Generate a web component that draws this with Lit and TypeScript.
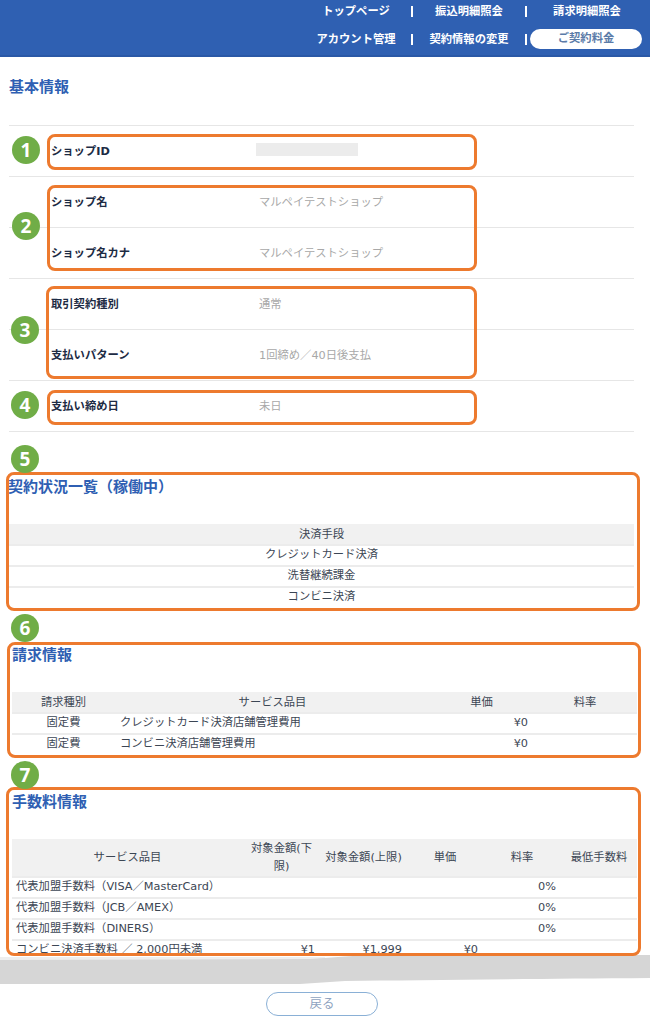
import { LitElement, html, css, svg } from "lit";
import { customElement } from "lit/decorators.js";

const marks = [
  { n: 1, x: 26, y: 150 },
  { n: 2, x: 26, y: 226 },
  { n: 3, x: 25, y: 330 },
  { n: 4, x: 25, y: 405 },
  { n: 5, x: 25, y: 459 },
  { n: 6, x: 25, y: 628 },
  { n: 7, x: 25, y: 775 },
];
const boxes = [
  { x: 47, y: 134, w: 430, h: 36 },
  { x: 47, y: 185, w: 430, h: 86 },
  { x: 46, y: 286, w: 431, h: 93 },
  { x: 47, y: 390, w: 430, h: 35 },
  { x: 6, y: 472, w: 634, h: 139 },
  { x: 7, y: 642, w: 634, h: 116 },
  { x: 6, y: 787, w: 635, h: 169 },
];
const info = [
  ["ショップID", ""],
  ["ショップ名", "マルペイテストショップ"],
  ["ショップ名カナ", "マルペイテストショップ"],
  ["取引契約種別", "通常"],
  ["支払いパターン", "1回締め／40日後支払"],
  ["支払い締め日", "未日"],
];

@customElement("app-root")
export class AppRoot extends LitElement {
  static styles = css`
    :host {
      display: block;
      position: relative;
      width: 650px;
      height: 1024px;
      overflow: hidden;
      background: #fff;
      font-family: "DejaVu Sans", "Noto Sans CJK JP", sans-serif;
      font-size: 11.3px;
      color: #3c4654;
    }
    header {
      height: 55px;
      background: #2f60b2;
      border-bottom: 2px solid #2a58a6;
      display: grid;
      grid-template-rows: 22px 22px;
      row-gap: 6px;
      justify-content: end;
    }
    .nav {
      display: grid;
      grid-template-columns: 112px 114px 120px;
      align-items: center;
      color: #fff;
      font-weight: 700;
      padding-right: 3px;
    }
    .nav span {
      text-align: center;
      border-right: 2px solid #fff;
      line-height: 11px;
    }
    .nav span:last-child {
      border-right: 0;
    }
    .nav .pill {
      background: #fff;
      color: #5b7ba8;
      border-radius: 11px;
      line-height: 20px;
      height: 20px;
      margin-left: 3px;
      width: 112px;
    }
    h2 {
      margin: 0;
      font-size: 15px;
      line-height: 20px;
      font-weight: 700;
      color: #2f5fb3;
    }
    .basic {
      padding: 20px 16px 0 9px;
    }
    .rows {
      margin-top: 28px;
      border-top: 1px solid #e6e6e6;
    }
    .row {
      box-sizing: border-box;
      height: 51px;
      border-bottom: 1px solid #e6e6e6;
      display: grid;
      grid-template-columns: 208px 1fr;
      padding-left: 42px;
      padding-bottom: 3px;
      align-items: center;
    }
    .row b {
      color: #1d2b44;
    }
    .row i {
      font-style: normal;
      color: #a8a8a8;
    }
    .mask {
      display: block;
      width: 102px;
      height: 13px;
      background: #ececec;
      margin-left: -3px;
    }
    .s5 {
      padding: 45px 16px 0 8px;
    }
    .s6 {
      padding: 38px 13px 0 12px;
    }
    .s7 {
      padding: 38px 13px 0 12px;
      height: 164px;
      overflow: hidden;
    }
    table {
      width: 100%;
      border-collapse: collapse;
      table-layout: fixed;
      margin-top: 27px;
    }
    .s5 table {
      width: calc(100% - 1px);
      margin-left: 1px;
    }
    th {
      background: #f1f1f1;
      font-weight: 400;
      height: 19px;
      padding: 1px 0 0;
      text-align: center;
      line-height: 18px;
    }
    td {
      height: 16px;
      padding: 1px 5px 2px;
      border-top: 2px solid #ececec;
      line-height: 16px;
      white-space: nowrap;
    }
    .c {
      text-align: center;
    }
    .r {
      text-align: right;
    }
    .s7 td:first-child {
      padding-left: 4px;
    }
    .s7 th {
      height: 37px;
      padding: 0 5px;
    }
    .band {
      display: block;
      width: 650px;
      height: 36px;
      margin-top: -1px;
    }
    .foot {
      display: flex;
      justify-content: center;
      margin-top: 1px;
    }
    .back {
      width: 110px;
      height: 22px;
      line-height: 22px;
      border: 1px solid #8ab0d6;
      border-radius: 12px;
      text-align: center;
      color: #8fa3c0;
      font-size: 12.5px;
      margin-right: 6px;
    }
    .box {
      position: absolute;
      box-sizing: border-box;
      border: 3px solid #ed7a2e;
      border-radius: 8px;
    }
    .mark {
      position: absolute;
      width: 28px;
      height: 28px;
      margin: -14px 0 0 -14px;
      border-radius: 50%;
      background: #70ad47;
      color: #fff;
      font-family: "Open Sans", sans-serif;
      font-weight: 700;
      font-size: 19px;
      line-height: 28px;
      text-align: center;
    }
  `;

  render() {
    return html`
      <header>
        <div class="nav"><span>トップページ</span><span>振込明細照会</span><span>請求明細照会</span></div>
        <div class="nav"><span>アカウント管理</span><span>契約情報の変更</span><span class="pill">ご契約料金</span></div>
      </header>
      <section class="basic">
        <h2>基本情報</h2>
        <div class="rows">
          ${info.map(
            ([k, v]) => html`<div class="row"><b>${k}</b>${v ? html`<i>${v}</i>` : html`<i class="mask"></i>`}</div>`
          )}
        </div>
      </section>
      <section class="s5">
        <h2>契約状況一覧（稼働中）</h2>
        <table>
          <tr><th>決済手段</th></tr>
          <tr><td class="c">クレジットカード決済</td></tr>
          <tr><td class="c">洗替継続課金</td></tr>
          <tr><td class="c">コンビニ決済</td></tr>
        </table>
      </section>
      <section class="s6">
        <h2>請求情報</h2>
        <table>
          <colgroup><col style="width:103px" /><col style="width:315px" /><col style="width:103px" /><col style="width:104px" /></colgroup>
          <tr><th>請求種別</th><th>サービス品目</th><th>単価</th><th>料率</th></tr>
          <tr><td class="c">固定費</td><td>クレジットカード決済店舗管理費用</td><td class="r">¥0</td><td></td></tr>
          <tr><td class="c">固定費</td><td>コンビニ決済店舗管理費用</td><td class="r">¥0</td><td></td></tr>
        </table>
      </section>
      <section class="s7">
        <h2>手数料情報</h2>
        <table>
          <colgroup><col style="width:231px" /><col style="width:77px" /><col style="width:87px" /><col style="width:76px" /><col style="width:78px" /><col style="width:76px" /></colgroup>
          <tr><th>サービス品目</th><th>対象金額(下限)</th><th>対象金額(上限)</th><th>単価</th><th>料率</th><th>最低手数料</th></tr>
          <tr><td>代表加盟手数料（VISA／MasterCard）</td><td></td><td></td><td></td><td class="r">0%</td><td></td></tr>
          <tr><td>代表加盟手数料（JCB／AMEX）</td><td></td><td></td><td></td><td class="r">0%</td><td></td></tr>
          <tr><td>代表加盟手数料（DINERS）</td><td></td><td></td><td></td><td class="r">0%</td><td></td></tr>
          <tr><td>コンビニ決済手数料 ／ 2,000円未満</td><td class="r">¥1</td><td class="r">¥1,999</td><td class="r">¥0</td><td></td><td></td></tr>
        </table>
      </section>
      <svg class="band" viewBox="0 0 650 36" aria-hidden="true">
        ${svg`<path fill="#eeeeee" d="M0 2 L325 2 L325 6 L0 6 Z" />
        <path fill="#d6d6d6" d="M0 5 L310 4 C330 3 345 1 370 0 L650 0 L650 23 C520 24 420 25 345 26 L300 29 L0 29 Z" />`}
      </svg>
      <div class="foot"><div class="back">戻る</div></div>
      ${boxes.map(
        (b) => html`<div class="box" style="left:${b.x}px;top:${b.y}px;width:${b.w}px;height:${b.h}px"></div>`
      )}
      ${marks.map(
        (m) => html`<div class="mark" style="left:${m.x}px;top:${m.y}px">${m.n}</div>`
      )}
    `;
  }
}
